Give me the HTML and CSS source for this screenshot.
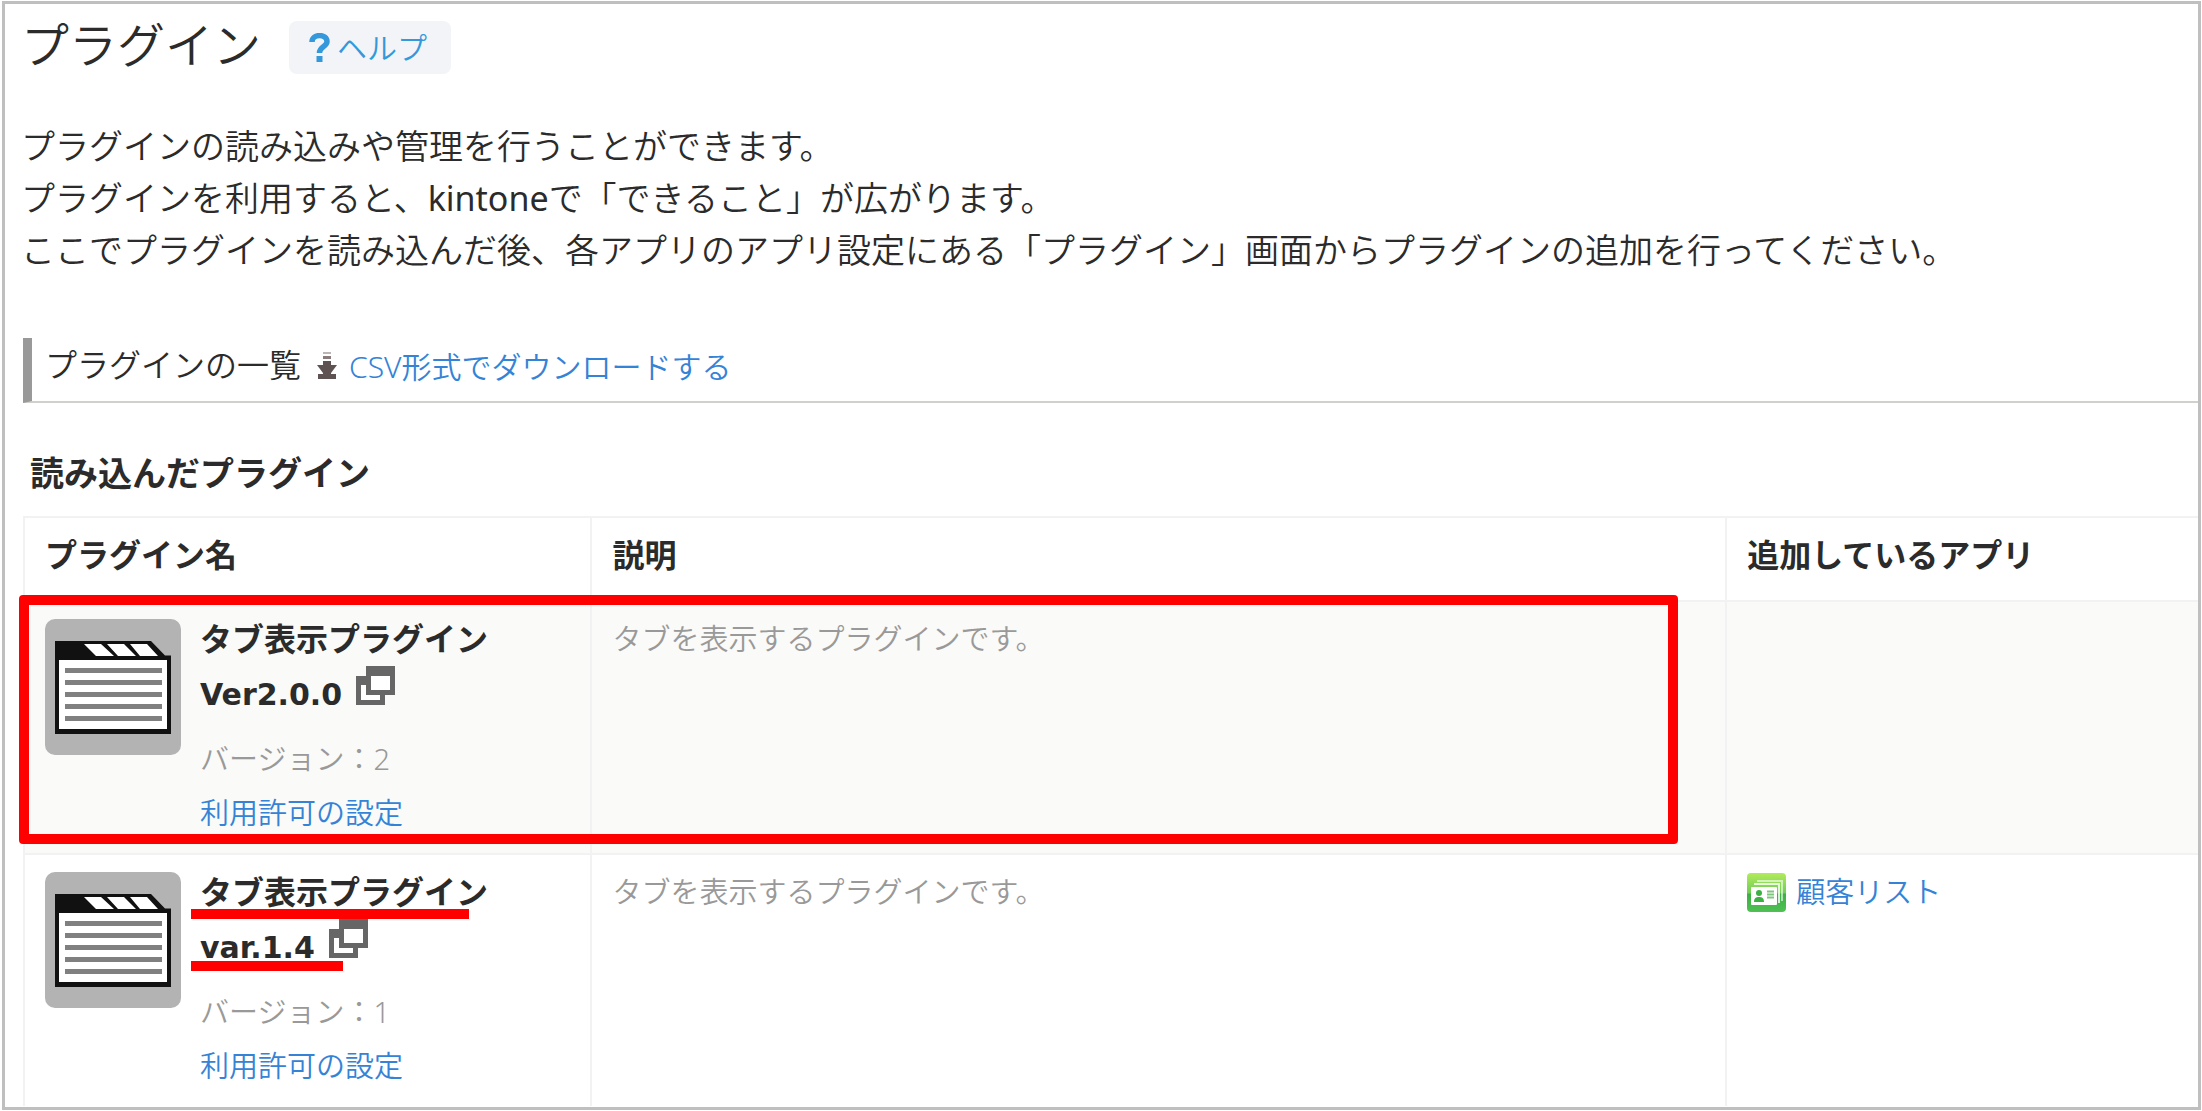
FILE: index.html
```html
<!DOCTYPE html>
<html lang="ja">

<head>
  <meta charset="UTF-8">
  <title>プラグイン</title>
  <link rel="stylesheet" href="styles.css">
</head>

<body>
  <!-- shared icons -->
  <svg class="symbols" aria-hidden="true">
    <symbol id="plugin-icon" viewBox="0 0 136 136">
      <rect width="136" height="136" rx="10" fill="#b3b3b3" />
      <path d="M10 22H106L120 36.500H126V115H10Z" fill="#111" />
      <path d="M14 41H122V110H14Z" fill="#fff" />
      <path d="M39 25H56L69 37H51Z M62 25H79L91 37H73Z M85 25H102L113 37H95Z" fill="#fff" />
      <path d="M20 51.500H117M20 63.500H117M20 75.500H117M20 87.500H117M20 99.500H117" stroke="#808080" stroke-width="5" />
    </symbol>
    <symbol id="window-icon" viewBox="0 0 39 39">
      <path fill="#666" fill-rule="evenodd" d="M10 0H39V29H29V39H0V10H10ZM15 10V24H34V10ZM5 19V34H24V29H10V19Z" />
      <path fill="#fff" d="M15 10H34V24H15ZM5 19H10V29H24V34H5Z" />
    </symbol>
  </svg>

  <main class="frame">
    <header class="page-header">
      <h1>プラグイン</h1>
      <a class="help" href="#">
        <svg width="21" height="29" viewBox="0 0 21 29" aria-hidden="true">
          <path d="M3 9C3 0.500 18 0.500 18 8.500C18 14 10.500 13 10.500 20" fill="none" stroke="#3498db" stroke-width="5.500" />
          <rect x="7.500" y="23" width="6" height="6" fill="#3498db" />
        </svg>
        ヘルプ
      </a>
    </header>

    <p class="intro">
      プラグインの読み込みや管理を行うことができます。<br>
      プラグインを利用すると、<span class="product">kintone</span>で「できること」が広がります。<br>
      ここでプラグインを読み込んだ後、各アプリのアプリ設定にある「プラグイン」画面からプラグインの追加を行ってください。
    </p>

    <div class="section-header">
      <h2>プラグインの一覧</h2>
      <a class="csv" href="#">
        <svg width="20" height="27" viewBox="0 0 20 27" aria-hidden="true">
          <path d="M6 0H14V2H6Z" fill="#bcb5b5" />
          <path d="M6 4H14V7H6Z" fill="#887c7c" />
          <path d="M6 9H14V13H20L14 21V22H19V27H1V22H6V21L0 13H6Z" fill="#5f5252" />
        </svg>
        CSV形式でダウンロードする
      </a>
    </div>

    <h3>読み込んだプラグイン</h3>

    <table class="plugins">
      <thead>
        <tr>
          <th class="col-name">プラグイン名</th>
          <th class="col-desc">説明</th>
          <th>追加しているアプリ</th>
        </tr>
      </thead>
      <tbody>
        <tr class="highlighted">
          <td>
            <div class="plugin">
              <svg class="plugin-icon" aria-hidden="true"><use href="#plugin-icon" /></svg>
              <div class="plugin-info">
                <p class="plugin-name">タブ表示プラグイン<br><span class="release">Ver2.0.0</span>
                  <a href="#" aria-label="新しいウィンドウで開く"><svg class="window-icon"><use href="#window-icon" /></svg></a></p>
                <p class="version">バージョン：2</p>
                <a href="#">利用許可の設定</a>
              </div>
            </div>
            <span class="mark-box"></span>
          </td>
          <td class="description">タブを表示するプラグインです。</td>
          <td></td>
        </tr>
        <tr>
          <td>
            <div class="plugin">
              <svg class="plugin-icon" aria-hidden="true"><use href="#plugin-icon" /></svg>
              <div class="plugin-info">
                <p class="plugin-name">タブ表示プラグイン<br><span class="release">var.1.4</span>
                  <a href="#" aria-label="新しいウィンドウで開く"><svg class="window-icon"><use href="#window-icon" /></svg></a>
                  <span class="mark-line mark-first"></span>
                  <span class="mark-line mark-second"></span></p>
                <p class="version">バージョン：1</p>
                <a href="#">利用許可の設定</a>
              </div>
            </div>
          </td>
          <td class="description">タブを表示するプラグインです。</td>
          <td>
            <a class="app" href="#">
              <svg width="39" height="39" viewBox="0 0 39 39" aria-hidden="true">
                <defs>
                  <linearGradient id="green" x1="0" y1="0" x2="0" y2="1">
                    <stop offset="0" stop-color="#b4ea5c" />
                    <stop offset="0.500" stop-color="#6fce55" />
                    <stop offset="0.550" stop-color="#3cb043" />
                    <stop offset="1" stop-color="#4fc154" />
                  </linearGradient>
                </defs>
                <rect width="39" height="39" rx="4" fill="url(#green)" />
                <path d="M10 7H36V28H34V9H10Z" fill="#fff" opacity="0.600" />
                <path d="M7 10H33V30H31V12H7Z" fill="#fff" opacity="0.800" />
                <rect x="4" y="14" width="26" height="18" rx="1" fill="#fff" />
                <circle cx="12" cy="20" r="3" fill="#3cb043" />
                <path d="M7 29C7 25 9 24 12 24S17 25 17 29Z" fill="#3cb043" />
                <path d="M20 18.500H27M20 21.500H27M20 24.500H27" stroke="#7cc67d" stroke-width="2" />
              </svg>
              顧客リスト
            </a>
          </td>
        </tr>
      </tbody>
    </table>
  </main>
</body>

</html>
```
FILE: styles.css
```css
* {
  box-sizing: border-box;
}

body {
  margin: 0;
  padding: 1px 1px 1px 2px;
  background-color: #fff;
  color: #2b2b2b;
  font-family: "Noto Sans", "Noto Sans CJK JP", sans-serif;
  font-size: 29px;
  font-weight: 350;
}

h1,
h2,
h3,
p {
  margin: 0;
}

a {
  color: #3583d6;
  text-decoration: none;
}

.symbols {
  display: none;
}

.frame {
  min-height: calc(100vh - 2px);
  padding: 17px 0 0 18px;
  border: 3px solid #bfbfbf;
  overflow: hidden;
}

/* Page header */
.page-header {
  display: flex;
  align-items: center;
  gap: 28px;
  margin-left: -2px;
}

h1 {
  padding-bottom: 5px;
  font-size: 48px;
  font-weight: 350;
  line-height: 48px;
}

.help {
  display: flex;
  align-items: center;
  gap: 7px;
  padding: 0 24px 0 20px;
  border-radius: 8px;
  background-color: #f2f4f7;
  color: #3498db;
  font-size: 30px;
  line-height: 53px;
}

.intro {
  margin-top: 46px;
  margin-left: -2px;
  font-size: 34px;
  line-height: 52px;
}

.product {
  font-weight: 400;
}

/* Section heading with the CSV link */
.section-header {
  display: flex;
  align-items: center;
  gap: 16px;
  margin-top: 62px;
  padding: 0 0 9px 13px;
  border-left: 9px solid #999;
  border-bottom: 2px solid #d0d0cc;
}

.section-header h2 {
  font-size: 32px;
  font-weight: 350;
  line-height: 54px;
}

.csv {
  display: flex;
  align-items: center;
  gap: 12px;
  font-size: 30px;
}

h3 {
  margin: 44px 0 17px;
  padding-left: 7px;
  font-size: 34px;
  line-height: 52px;
}

/* Plugin table */
.plugins {
  width: 100%;
  border-collapse: collapse;
  table-layout: fixed;
  line-height: 54px;
}

.plugins th,
.plugins td {
  padding: 10px 20px 13px;
  border: 2px solid #f2f2f2;
  border-right: none;
  text-align: left;
  vertical-align: top;
}

.plugins th {
  padding-bottom: 18px;
  font-size: 32px;
}

.plugins tr:last-child td {
  border-bottom: none;
}

.col-name {
  width: 26.1%;
}

.col-desc {
  width: 52.2%;
}

.highlighted {
  position: relative;
  background-color: #fafaf8;
}

.plugin {
  display: flex;
  gap: 19px;
}

.plugin-icon {
  flex: none;
  width: 136px;
  height: 136px;
  margin-top: 7px;
}

.plugin-name {
  position: relative;
  margin-bottom: 12px;
  font-size: 32px;
  font-weight: bold;
}

.release {
  font-family: "DejaVu Sans", sans-serif;
  font-size: 30px;
  line-height: 1;
}

.window-icon {
  width: 39px;
  height: 39px;
  margin: -6px 0 0 6px;
}

.version,
.description {
  color: #999;
}

.app {
  display: flex;
  align-items: center;
  gap: 10px;
}

/* Red marks over the table */
.mark-box {
  position: absolute;
  top: -6px;
  bottom: 10px;
  left: -5px;
  width: 76.3%;
  border: 10px solid #f00;
  border-radius: 4px;
}

.mark-line {
  position: absolute;
  left: -9px;
  height: 10px;
  background-color: #f00;
}

.mark-first {
  top: 44px;
  width: 278px;
}

.mark-second {
  top: 96px;
  width: 152px;
}
```
